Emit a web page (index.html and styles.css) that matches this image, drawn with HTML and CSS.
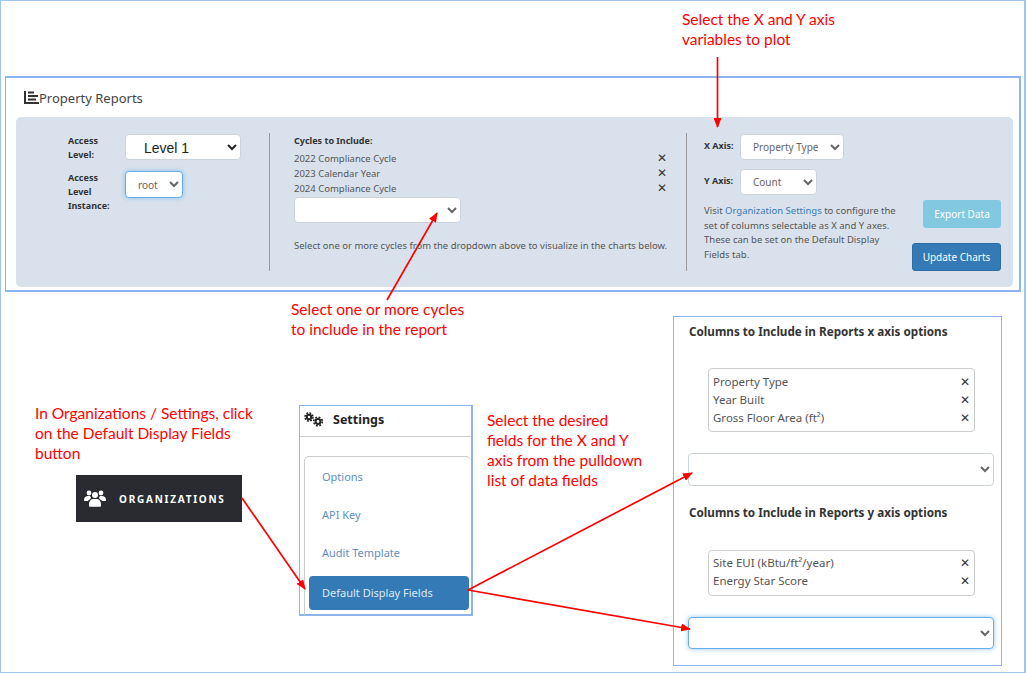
FILE: index.html
```html
<!DOCTYPE html>
<html lang="en">
<head>
    <meta charset="UTF-8">
    <title>Property Reports help</title>
    <link rel="stylesheet" href="styles.css">
</head>
<body>
    <div class="canvas">

        <p class="note note-axis">Select the X and Y axis<br>variables to plot</p>

        <!-- Property reports panel -->
        <section class="shot report">
            <h2 class="report-title">
                <svg class="report-icon" width="15" height="13" viewBox="0 0 15 13">
                    <path d="M1 0v12h14" fill="none" stroke="#333" stroke-width="2"/>
                    <path d="M4 1.5h6M4 5h10M4 8.5h8" fill="none" stroke="#333" stroke-width="2"/>
                </svg>Property Reports
            </h2>
            <div class="report-body">
                <div class="col col-level">
                    <div class="field-row">
                        <label class="field-label">Access Level:</label>
                        <select class="select select-level"><option>Level 1</option></select>
                    </div>
                    <div class="field-row">
                        <label class="field-label">Access Level Instance:</label>
                        <select class="select select-root is-focus"><option>root</option></select>
                    </div>
                </div>
                <div class="col col-cycles">
                    <div class="field-label cycles-title">Cycles to Include:</div>
                    <ul class="cycle-list">
                        <li>2022 Compliance Cycle<span class="remove">✕</span></li>
                        <li>2023 Calendar Year<span class="remove">✕</span></li>
                        <li>2024 Compliance Cycle<span class="remove">✕</span></li>
                    </ul>
                    <select class="select select-cycle"></select>
                    <p class="help">Select one or more cycles from the dropdown above to visualize in the charts below.</p>
                </div>
                <div class="col col-axis">
                    <div class="axis-left">
                        <div class="axis-row">
                            <label class="field-label">X Axis:</label>
                            <select class="select select-x"><option>Property Type</option></select>
                        </div>
                        <div class="axis-row">
                            <label class="field-label">Y Axis:</label>
                            <select class="select select-y"><option>Count</option></select>
                        </div>
                        <p class="help">Visit <a class="link" href="#">Organization Settings</a> to configure the set of columns selectable as X and Y axes. These can be set on the Default Display Fields tab.</p>
                    </div>
                    <div class="axis-actions">
                        <button class="btn btn-export">Export Data</button>
                        <button class="btn btn-update">Update Charts</button>
                    </div>
                </div>
            </div>
        </section>

        <p class="note note-cycles">Select one or more cycles<br>to include in the report</p>
        <p class="note note-org">In Organizations / Settings, click<br>on the Default Display Fields<br>button</p>
        <p class="note note-fields">Select the desired<br>fields for the X and Y<br>axis from the pulldown<br>list of data fields</p>

        <!-- Sidebar button -->
        <div class="org-button">
            <svg width="22" height="17" viewBox="0 0 22 17" fill="#fff">
                <circle cx="5" cy="3" r="2.4"/>
                <circle cx="17" cy="3" r="2.4"/>
                <circle cx="11" cy="5" r="3"/>
                <path d="M0 10c0-3 2-4 4-4h2c1 1 1 2 .5 3-1 .5-2 1-2.500 2H1c-.6 0-1-.4-1-1zM22 10c0-3-2-4-4-4h-2c-1 1-1 2-.5 3 1 .5 2 1 2.500 2h3c.6 0 1-.4 1-1zM5 14c0-3 2-5 4-5h4c2 0 4 2 4 5v1.500c0 .8-.5 1.300-1.300 1.300H6.300C5.500 16.800 5 16.300 5 15.500z"/>
            </svg>
            <span>ORGANIZATIONS</span>
        </div>

        <!-- Settings panel -->
        <section class="shot settings">
            <h3 class="settings-title">
                <svg width="19" height="15" viewBox="0 0 19 15" fill="none" stroke="#222">
                    <circle cx="5" cy="5" r="2.200" stroke-width="2"/>
                    <circle cx="5" cy="5" r="4" stroke-width="1.600" stroke-dasharray="1.800 1.340"/>
                    <circle cx="14" cy="9.500" r="2.400" stroke-width="2"/>
                    <circle cx="14" cy="9.500" r="4.300" stroke-width="1.600" stroke-dasharray="1.900 1.480"/>
                </svg>
                Settings
            </h3>
            <nav class="settings-nav">
                <a class="nav-item" href="#">Options</a>
                <a class="nav-item" href="#">API Key</a>
                <a class="nav-item" href="#">Audit Template</a>
                <a class="nav-item is-active" href="#">Default Display Fields</a>
            </nav>
        </section>

        <!-- Column options panel -->
        <section class="shot columns">
            <h4 class="columns-title">Columns to Include in Reports x axis options</h4>
            <ul class="pick-list">
                <li>Property Type<span class="remove">✕</span></li>
                <li>Year Built<span class="remove">✕</span></li>
                <li>Gross Floor Area (ft²)<span class="remove">✕</span></li>
            </ul>
            <select class="select select-wide"></select>
            <h4 class="columns-title title-y">Columns to Include in Reports y axis options</h4>
            <ul class="pick-list pick-list-short">
                <li>Site EUI (kBtu/ft²/year)<span class="remove">✕</span></li>
                <li>Energy Star Score<span class="remove">✕</span></li>
            </ul>
            <select class="select select-wide is-focus"></select>
        </section>

        <!-- Red callout arrows -->
        <svg class="arrows" width="1026" height="673" viewBox="0 0 1026 673">
            <defs>
                <marker id="head" markerWidth="10" markerHeight="8" refX="9" refY="4" orient="auto" markerUnits="userSpaceOnUse" viewBox="0 0 10 8">
                    <path d="M0 0L10 4L0 8z" fill="#f00"/>
                </marker>
            </defs>
            <g stroke="#f00" stroke-width="1.700">
                <line x1="717.500" y1="57" x2="717.500" y2="127" marker-end="url(#head)"/>
                <line x1="387" y1="300" x2="437" y2="213" marker-end="url(#head)"/>
                <line x1="242" y1="498" x2="305" y2="589" marker-end="url(#head)"/>
                <line x1="468" y1="590" x2="692" y2="473" marker-end="url(#head)"/>
                <line x1="468" y1="590" x2="690" y2="629" marker-end="url(#head)"/>
            </g>
        </svg>
    </div>
</body>
</html>
```

FILE: styles.css
```css
* {
    margin: 0;
    padding: 0;
    box-sizing: border-box;
}

body {
    font-family: "Noto Sans", Arial, sans-serif;
    background: #fff;
    color: #444;
}

/* The page is an annotated collage, so its pieces sit on a free canvas */
.canvas {
    position: relative;
    width: 1026px;
    height: 673px;
    border: 1px solid #9cc6ec;
    border-right-width: 2px;
    overflow: hidden;
}

.arrows {
    position: absolute;
    left: -1px;
    top: -1px;
    pointer-events: none;
}

.note {
    position: absolute;
    font-family: Lato, "Noto Sans", sans-serif;
    font-size: 15.500px;
    line-height: 20px;
    color: #f00;
}

.note-axis { left: 681px; top: 8px; }
.note-cycles { left: 290px; top: 298px; }
.note-org { left: 34px; top: 402px; }
.note-fields { left: 486px; top: 409px; }

.shot {
    position: absolute;
    background: #fff;
    border: 1px solid #8db4ee;
}

/* Report panel */
.report {
    left: 4px;
    top: 75px;
    width: 1016px;
    height: 216px;
    border-width: 2px 2px 2px 1px;
    padding: 0 6px 3px 10px;
}

.report-title {
    display: flex;
    align-items: center;
    height: 39px;
    padding: 0 0 0 8px;
    font-size: 13px;
    font-weight: 400;
    color: #444;
}

.report-body {
    display: flex;
    height: 170px;
    padding: 16px 0;
    background: #d9e2ec;
    border-radius: 5px;
}

.col {
    flex-shrink: 0;
    height: 138px;
    font-size: 9.500px;
}

.col-level {
    width: 254px;
    padding: 1px 0 0 52px;
    border-right: 1px solid #999;
}

.col-cycles {
    width: 417px;
    padding: 0 19px 0 24px;
    border-right: 1px solid #999;
}

.col-axis {
    display: flex;
    flex: 1;
    padding: 1px 0 0 17px;
}

.field-row {
    display: flex;
    gap: 7px;
    margin-bottom: 9px;
}

.field-label {
    width: 50px;
    font-size: 9px;
    font-weight: 700;
    line-height: 14px;
    color: #333;
}

.select {
    display: block;
    background-color: #fff;
    border: 1px solid #ccd3da;
    border-radius: 4px;
    font-family: "Noto Sans", sans-serif;
    font-size: 10px;
    color: #666;
}

.is-focus {
    border-color: #66afe9;
    box-shadow: 0 0 5px rgba(102, 175, 233, 0.7);
}

.select-level {
    width: 116px;
    height: 26px;
    padding: 2px 0 0 14px;
    font-family: "Liberation Sans", sans-serif;
    font-size: 14px;
    color: #222;
}

.select-root {
    width: 58px;
    height: 27px;
    padding-left: 8px;
}

.select-cycle {
    width: 167px;
    height: 26px;
    margin-top: 1px;
}

.cycles-title {
    width: auto;
    line-height: 15px;
    margin-bottom: 3px;
}

.cycle-list,
.pick-list {
    list-style: none;
}

.cycle-list li {
    display: flex;
    justify-content: space-between;
    height: 15px;
    line-height: 15px;
    color: #555;
}

.remove {
    font-family: "DejaVu Sans", sans-serif;
    font-size: 12px;
    color: #333;
}

.help {
    line-height: 14.500px;
    color: #555;
}

.col-cycles .help {
    margin-top: 16px;
    white-space: nowrap;
}

.link {
    color: #3a78b5;
    text-decoration: none;
}

.axis-left {
    flex-shrink: 0;
    width: 205px;
}

.axis-left .help {
    width: 197px;
}

.axis-row {
    display: flex;
    margin-bottom: 9px;
}

.axis-row .field-label {
    width: 36px;
    line-height: 24px;
}

.select-x {
    width: 104px;
    height: 26px;
    padding-left: 8px;
}

.select-y {
    width: 77px;
    height: 26px;
    padding-left: 8px;
}

.axis-actions {
    display: flex;
    flex-direction: column;
    align-items: flex-end;
    flex: 1;
    padding: 66px 12px 0 0;
}

.btn {
    height: 28px;
    border: 1px solid transparent;
    border-radius: 3px;
    font-family: "Noto Sans", sans-serif;
    font-size: 10px;
    color: #fff;
}

.btn-export {
    width: 78px;
    margin-bottom: 15px;
    background: #81c8e0;
}

.btn-update {
    width: 89px;
    background: #337ab7;
    border-color: #2e6da4;
}

/* Organizations sidebar button */
.org-button {
    position: absolute;
    left: 75px;
    top: 474px;
    display: flex;
    align-items: center;
    gap: 13px;
    width: 166px;
    height: 47px;
    padding-left: 8px;
    background: #2a2b30;
    color: #fff;
    font-size: 10px;
    font-weight: 700;
    letter-spacing: 1.750px;
}

/* Settings panel */
.settings {
    left: 298px;
    top: 404px;
    width: 174px;
    height: 211px;
    border-width: 1px 2px 2px 1px;
}

.settings-title {
    display: flex;
    align-items: center;
    gap: 10px;
    height: 31px;
    padding: 0 0 4px 4px;
    border-bottom: 1px solid #ccc;
    font-size: 12.500px;
    font-weight: 700;
    color: #222;
}

.settings-nav {
    display: flex;
    flex-direction: column;
    height: 159px;
    margin: 19px 0 0 4px;
    padding: 0 2px 0 4px;
    border: 1px solid #ccc;
    border-right: 0;
    border-bottom: 0;
    border-radius: 5px 5px 0 0;
}

.nav-item {
    height: 38px;
    padding: 12px 0 0 13px;
    font-size: 11px;
    line-height: 15px;
    color: #5f8fc0;
    text-decoration: none;
}

.nav-item.is-active {
    flex-shrink: 0;
    height: 34px;
    margin-top: 5px;
    padding-top: 9px;
    background: #337ab7;
    border-radius: 4px;
    color: #dfe9f3;
}

/* Column options panel */
.columns {
    left: 672px;
    top: 315px;
    width: 329px;
    height: 350px;
    padding: 6px 0 0 15px;
}

.columns-title {
    font-size: 11.700px;
    font-weight: 700;
    line-height: 16px;
    color: #333;
}

.title-y {
    margin-top: 18px;
}

.pick-list {
    width: 267px;
    margin: 29px 0 0 19px;
    padding: 4px 4px 4px;
    border: 1px solid #ccc;
    border-radius: 4px;
    font-size: 11.500px;
    line-height: 18px;
    color: #555;
}

.pick-list-short {
    margin-top: 30px;
    padding: 3px 4px 5px;
}

.pick-list li {
    display: flex;
    justify-content: space-between;
}

.select-wide {
    width: 306px;
    height: 33px;
    margin: 21px 0 0 -1px;
}

.select-wide.is-focus {
    height: 32px;
}
```
